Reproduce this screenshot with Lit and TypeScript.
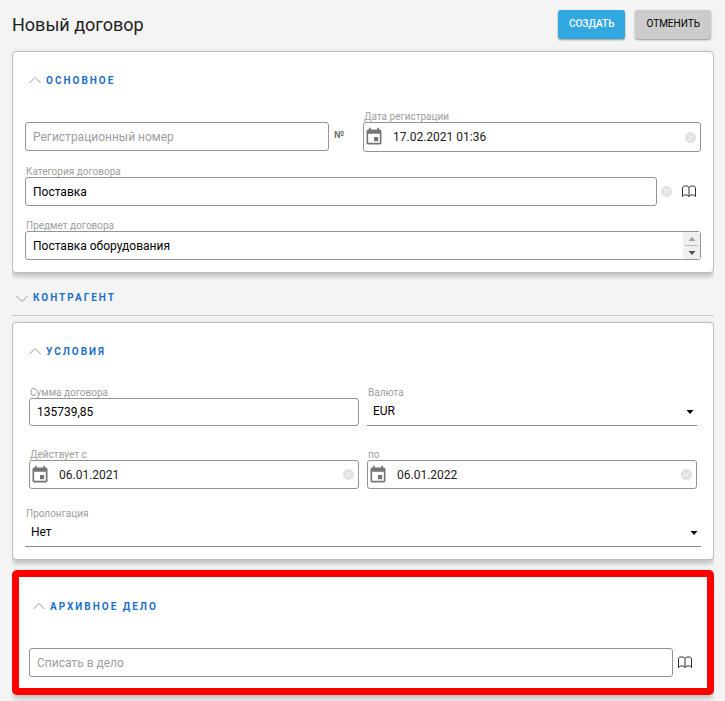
import { LitElement, html, css, nothing, TemplateResult } from "lit";
import { customElement, state } from "lit/decorators.js";
import { classMap } from "lit/directives/class-map.js";

const chevron = (open: boolean) => html`
  <svg class="chevron" viewBox="0 0 12 16" aria-hidden="true">
    <path d=${open ? "M0.5 10 6 4.5 11.5 10" : "M0.5 6 6 11.5 11.5 6"} />
  </svg>
`;

const calendarIcon = html`
  <svg class="calendar" viewBox="0 0 24 24" aria-hidden="true">
    <path
      d="M17 12h-5v5h5v-5zM16 1v2H8V1H6v2H5c-1.11 0-1.99.9-1.99 2L3 19c0 1.1.89 2 2 2h14c1.1 0 2-.9 2-2V5c0-1.1-.9-2-2-2h-1V1h-2zm3 18H5V8h14v11z"
    />
  </svg>
`;

const clearIcon = html`
  <svg class="clear-icon" viewBox="0 0 11 11" aria-hidden="true">
    <circle cx="5.5" cy="5.5" r="5.5" />
    <path d="M3.5 3.5l4 4M7.5 3.5l-4 4" />
  </svg>
`;

const bookIcon = html`
  <svg class="book-icon" viewBox="0 0 16 13" aria-hidden="true">
    <path
      d="M8 2.5C7.5 1.500 6.500 1 5 1H4C2.500 1 1.500 1.800 1.500 2.500V11.500C2 10.500 3 10 4 10H5C6.500 10 7.500 10.500 8 11.500C8.500 10.500 9.500 10 11 10H12C13 10 14 10.500 14.500 11.500V2.500C14.500 1.800 13.500 1 12 1H11C9.500 1 8.500 1.500 8 2.500V11.500"
    />
  </svg>
`;

const caret = html`
  <svg class="caret" viewBox="0 0 8 4" aria-hidden="true"><path d="M0.500 0h7L4 4z" /></svg>
`;

@customElement("app-root")
export class AppRoot extends LitElement {
  @state() private open: Record<string, boolean> = {
    main: true,
    partner: false,
    terms: true,
    archive: true,
  };

  static styles = css`
    :host {
      display: block;
      box-sizing: border-box;
      min-height: 100vh;
      padding: 10px 11px 6px 12px;
      background: #f4f4f4;
      color: #000;
      font: 12px/16px Roboto, "Liberation Sans", sans-serif;
    }
    *,
    *::before {
      box-sizing: border-box;
    }
    button,
    input,
    select,
    textarea {
      margin: 0;
      padding: 0;
      border: 0;
      background: none;
      color: inherit;
      font: inherit;
      outline: none;
    }
    button {
      cursor: pointer;
    }
    svg {
      display: block;
      flex: none;
    }
    .header {
      display: flex;
      align-items: center;
      gap: 10px;
      margin: 0 3px 12px 0;
    }
    .title {
      flex: 1;
      margin: 0;
      color: #212121;
      font-size: 18px;
      font-weight: 400;
      line-height: 28px;
    }
    .action {
      height: 29px;
      padding: 0 11px 2px;
      border-radius: 3px;
      background: #ccc;
      box-shadow: 0 1px 2px rgba(0, 0, 0, 0.4);
      font-size: 10px;
      font-weight: 400;
      text-transform: uppercase;
    }
    .action.primary {
      background: #32a8e1;
      color: #fff;
      font-weight: 500;
    }
    .card {
      padding: 21px 12px 12px;
      border: 1px solid #bdbdbd;
      border-radius: 4px;
      background: #fff;
      box-shadow: 0 3px 6px rgba(0, 0, 0, 0.25);
      clip-path: inset(-5px 0 -6px);
    }
    .card.marked {
      margin-top: 10px;
      padding: 22px 10px 11px;
      border: 7px solid #f00;
      border-radius: 5px;
    }
    .collapsed {
      margin-bottom: 6px;
      padding: 17px 0 9px;
      border-bottom: 1px solid #c8c8c8;
    }
    .heading {
      margin: 0;
      font-size: 10px;
      font-weight: 700;
      line-height: 16px;
    }
    .toggle {
      display: flex;
      gap: 5px;
      margin-left: 4px;
      color: #1b70c8;
      letter-spacing: 2px;
      text-transform: uppercase;
    }
    .chevron {
      width: 12px;
      height: 16px;
      fill: none;
      stroke: #9a9a9a;
    }
    .fields {
      display: grid;
      gap: 11px;
      margin-top: 19px;
    }
    .pair {
      display: grid;
      grid-template-columns: 1fr 1fr;
    }
    .inset {
      display: grid;
      grid-template-columns: 1fr 1fr;
      gap: 20px 8px;
      padding: 5px 4px;
    }
    .label {
      display: block;
      height: 14px;
      padding-left: 1px;
      color: #9e9e9e;
      font-size: 10px;
      line-height: 17px;
      white-space: nowrap;
    }
    .row {
      display: flex;
    }
    .box {
      display: flex;
      flex: 1;
      align-items: center;
      min-width: 0;
      height: 29px;
      border: 1px solid #949494;
      border-radius: 3px;
      background: #fff;
    }
    .pair .date .box {
      height: 30px;
    }
    .amount .box {
      height: 28px;
    }
    .control {
      flex: 1;
      min-width: 0;
      width: 100%;
      height: 16px;
      padding: 0 7px;
      line-height: 16px;
      resize: none;
      overflow: hidden;
    }
    .control::placeholder {
      color: #9e9e9e;
      opacity: 1;
    }
    .date .box {
      padding-right: 4px;
    }
    .date .control {
      padding: 0 9px;
      color: #212121;
    }
    .calendar {
      width: 20px;
      height: 20px;
      fill: #757575;
    }
    .clear-icon {
      width: 11px;
      height: 11px;
      fill: #e2e2e2;
      stroke: #fff;
    }
    .clear-icon circle {
      stroke: none;
    }
    .book-icon {
      width: 16px;
      height: 13px;
      fill: none;
      stroke: #333;
    }
    .side {
      display: flex;
      flex: none;
      align-items: center;
      gap: 9px;
      padding-left: 4px;
    }
    .category-side {
      width: 44px;
    }
    .archive-side {
      width: 24px;
    }
    .number-side {
      width: 34px;
      padding: 0 0 4px 5px;
    }
    .number {
      color: #666;
      font-size: 10px;
      font-weight: 500;
    }
    .scroller {
      display: flex;
      flex-direction: column;
      width: 17px;
      height: 100%;
      background: #f0f0f0;
    }
    .step {
      display: grid;
      flex: 1;
      place-items: center;
    }
    .step + .step {
      margin: 0 2px;
      border-top: 1px solid #bbb;
    }
    .step .caret {
      fill: #505050;
    }
    .step.up .caret {
      fill: #a0a0a0;
      transform: rotate(180deg);
    }
    .caret {
      width: 8px;
      height: 4px;
    }
    .select {
      display: grid;
      align-items: center;
      height: 28px;
      border-bottom: 1px solid #8c8c8c;
    }
    .select > * {
      grid-area: 1 / 1;
    }
    .select select {
      appearance: none;
      height: 26px;
      padding: 0 20px 1px 6px;
    }
    .select .caret {
      justify-self: end;
      margin-right: 3px;
      pointer-events: none;
    }
  `;

  private heading(key: string, text: string) {
    return html`
      <h2 class="heading">
        <button
          class="toggle"
          aria-expanded=${this.open[key] ? "true" : "false"}
          @click=${() => (this.open = { ...this.open, [key]: !this.open[key] })}
        >
          ${chevron(this.open[key])}<span>${text}</span>
        </button>
      </h2>
    `;
  }

  private section(key: string, text: string, body: TemplateResult | typeof nothing, marked = false) {
    const open = this.open[key];
    return html`
      <section class=${classMap({ card: open, marked: open && marked, collapsed: !open })}>
        ${this.heading(key, text)} ${open ? html`<div class="fields">${body}</div>` : nothing}
      </section>
    `;
  }

  private date(id: string, label: string, value: string) {
    return html`
      <div class="date">
        <label class="label" for=${id}>${label}</label>
        <div class="box">
          ${calendarIcon}<input class="control" id=${id} .value=${value} />
          <button aria-label="Очистить">${clearIcon}</button>
        </div>
      </div>
    `;
  }

  private select(id: string, label: string, options: string[]) {
    return html`
      <div>
        <label class="label" for=${id}>${label}</label>
        <div class="select">
          <select id=${id}>
            ${options.map((o) => html`<option>${o}</option>`)}
          </select>
          ${caret}
        </div>
      </div>
    `;
  }

  render() {
    return html`
      <header class="header">
        <h1 class="title">Новый договор</h1>
        <button class="action primary">Создать</button>
        <button class="action">Отменить</button>
      </header>

      ${this.section(
        "main",
        "Основное",
        html`
          <div class="pair">
            <div>
              <span class="label"></span>
              <div class="row">
                <div class="box">
                  <input class="control" aria-label="Регистрационный номер" placeholder="Регистрационный номер" />
                </div>
                <div class="side number-side"><button class="number">№</button></div>
              </div>
            </div>
            ${this.date("registered", "Дата регистрации", "17.02.2021 01:36")}
          </div>
          <div>
            <label class="label" for="category">Категория договора</label>
            <div class="row">
              <div class="box"><input class="control" id="category" .value=${"Поставка"} /></div>
              <div class="side category-side">
                <button aria-label="Очистить">${clearIcon}</button>
                <button aria-label="Справочник">${bookIcon}</button>
              </div>
            </div>
          </div>
          <div>
            <label class="label" for="subject">Предмет договора</label>
            <div class="box">
              <textarea class="control" id="subject" rows="1" .value=${"Поставка оборудования"}></textarea>
              <div class="scroller">
                <button class="step up" aria-label="Вверх">${caret}</button>
                <button class="step" aria-label="Вниз">${caret}</button>
              </div>
            </div>
          </div>
        `
      )}
      ${this.section("partner", "Контрагент", nothing)}
      ${this.section(
        "terms",
        "Условия",
        html`
          <div class="inset">
            <div class="amount">
              <label class="label" for="amount">Сумма договора</label>
              <div class="box"><input class="control" id="amount" .value=${"135739,85"} /></div>
            </div>
            ${this.select("currency", "Валюта", ["EUR", "USD", "RUB"])}
            ${this.date("from", "Действует с", "06.01.2021")} ${this.date("to", "по", "06.01.2022")}
          </div>
          ${this.select("prolongation", "Пролонгация", ["Нет", "Да"])}
        `
      )}
      ${this.section(
        "archive",
        "Архивное дело",
        html`
          <div>
            <span class="label"></span>
            <div class="row">
              <div class="box">
                <input class="control" aria-label="Списать в дело" placeholder="Списать в дело" />
              </div>
              <div class="side archive-side"><button aria-label="Справочник">${bookIcon}</button></div>
            </div>
          </div>
        `,
        true
      )}
    `;
  }
}
